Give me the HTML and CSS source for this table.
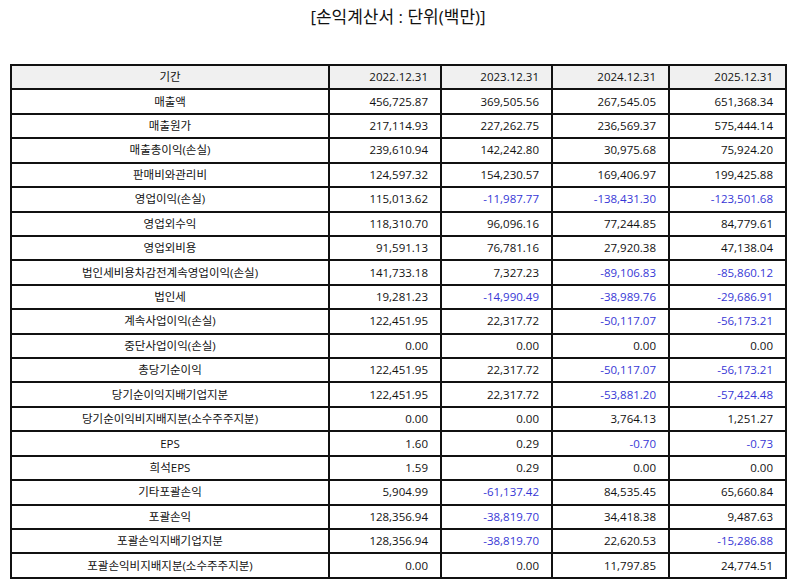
FILE: index.html
```html
<!DOCTYPE html>
<html lang="ko">
<head>
<meta charset="utf-8">
<title>손익계산서</title>
<link rel="stylesheet" href="styles.css">
</head>
<body>
<div class="page">
  <h1 class="title">[손익계산서 : 단위(백만)]</h1>
  <table class="fin">
    <colgroup>
      <col class="c-label"><col class="c-a"><col class="c-b"><col class="c-c"><col class="c-d">
    </colgroup>
    <thead>
      <tr><th>기간</th><th>2022.12.31</th><th>2023.12.31</th><th>2024.12.31</th><th>2025.12.31</th></tr>
    </thead>
    <tbody>
      <tr><td>매출액</td><td>456,725.87</td><td>369,505.56</td><td>267,545.05</td><td>651,368.34</td></tr>
      <tr><td>매출원가</td><td>217,114.93</td><td>227,262.75</td><td>236,569.37</td><td>575,444.14</td></tr>
      <tr><td>매출총이익(손실)</td><td>239,610.94</td><td>142,242.80</td><td>30,975.68</td><td>75,924.20</td></tr>
      <tr><td>판매비와관리비</td><td>124,597.32</td><td>154,230.57</td><td>169,406.97</td><td>199,425.88</td></tr>
      <tr><td>영업이익(손실)</td><td>115,013.62</td><td class="neg">-11,987.77</td><td class="neg">-138,431.30</td><td class="neg">-123,501.68</td></tr>
      <tr><td>영업외수익</td><td>118,310.70</td><td>96,096.16</td><td>77,244.85</td><td>84,779.61</td></tr>
      <tr><td>영업외비용</td><td>91,591.13</td><td>76,781.16</td><td>27,920.38</td><td>47,138.04</td></tr>
      <tr><td>법인세비용차감전계속영업이익(손실)</td><td>141,733.18</td><td>7,327.23</td><td class="neg">-89,106.83</td><td class="neg">-85,860.12</td></tr>
      <tr><td>법인세</td><td>19,281.23</td><td class="neg">-14,990.49</td><td class="neg">-38,989.76</td><td class="neg">-29,686.91</td></tr>
      <tr><td>계속사업이익(손실)</td><td>122,451.95</td><td>22,317.72</td><td class="neg">-50,117.07</td><td class="neg">-56,173.21</td></tr>
      <tr><td>중단사업이익(손실)</td><td>0.00</td><td>0.00</td><td>0.00</td><td>0.00</td></tr>
      <tr><td>총당기순이익</td><td>122,451.95</td><td>22,317.72</td><td class="neg">-50,117.07</td><td class="neg">-56,173.21</td></tr>
      <tr><td>당기순이익지배기업지분</td><td>122,451.95</td><td>22,317.72</td><td class="neg">-53,881.20</td><td class="neg">-57,424.48</td></tr>
      <tr><td>당기순이익비지배지분(소수주주지분)</td><td>0.00</td><td>0.00</td><td>3,764.13</td><td>1,251.27</td></tr>
      <tr><td>EPS</td><td>1.60</td><td>0.29</td><td class="neg">-0.70</td><td class="neg">-0.73</td></tr>
      <tr><td>희석EPS</td><td>1.59</td><td>0.29</td><td>0.00</td><td>0.00</td></tr>
      <tr><td>기타포괄손익</td><td>5,904.99</td><td class="neg">-61,137.42</td><td>84,535.45</td><td>65,660.84</td></tr>
      <tr><td>포괄손익</td><td>128,356.94</td><td class="neg">-38,819.70</td><td>34,418.38</td><td>9,487.63</td></tr>
      <tr><td>포괄손익지배기업지분</td><td>128,356.94</td><td class="neg">-38,819.70</td><td>22,620.53</td><td class="neg">-15,286.88</td></tr>
      <tr><td>포괄손익비지배지분(소수주주지분)</td><td>0.00</td><td>0.00</td><td>11,797.85</td><td>24,774.51</td></tr>
    </tbody>
  </table>
</div>
</body>
</html>
```

FILE: styles.css
```css
html, body {
  margin: 0;
  padding: 0;
  background: #ffffff;
}

body {
  font-family: "Open Sans", "Noto Sans CJK KR", sans-serif;
  color: #111111;
}

.page {
  padding: 5px 9px 0 10px;
}

.title {
  margin: 0;
  font-family: "Open Sans", "Noto Sans CJK KR", sans-serif;
  font-weight: normal;
  font-size: 17px;
  line-height: 24px;
  text-align: center;
  color: #111111;
}

.fin {
  margin-top: 35px;
  width: 776px;
  table-layout: fixed;
  border-collapse: collapse;
  font-size: 11.5px;
}

.fin tr {
  height: 24.43px;
}

.c-label { width: 318px; }
.c-a { width: 112px; }
.c-b { width: 111px; }
.c-c { width: 117px; }
.c-d { width: 117px; }

.fin th,
.fin td {
  border: 2px solid #111111;
  padding: 0 12px 0 4px;
  text-align: right;
  font-weight: normal;
  white-space: nowrap;
  line-height: 14px;
}

.fin th:first-child,
.fin td:first-child {
  text-align: center;
  padding: 0 4px;
}

.fin thead th {
  background: #f0f0f0;
}

.fin td.neg {
  color: #3737d6;
}
```
